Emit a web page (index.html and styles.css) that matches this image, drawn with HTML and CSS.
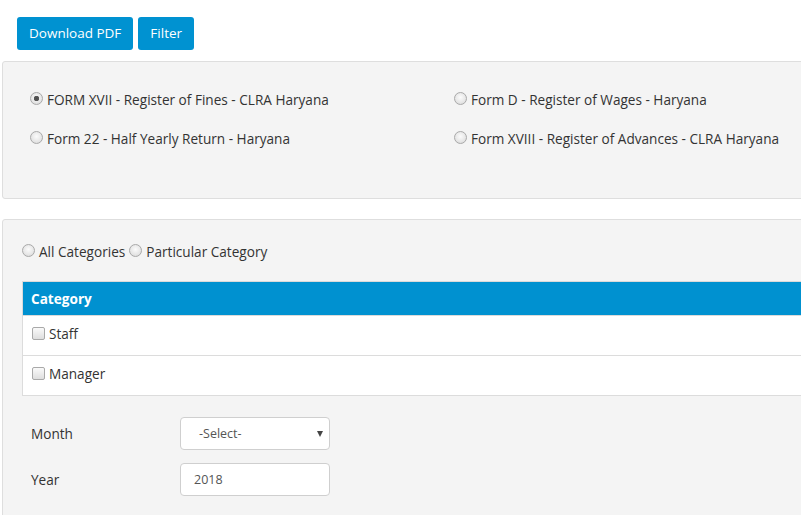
FILE: index.html
```html
<!DOCTYPE html>
<html>
<head>
<meta charset="utf-8">
<link rel="stylesheet" href="styles.css">
</head>
<body>
<div class="page">
  <div class="toolbar">
    <button class="btn">Download PDF</button>
    <button class="btn">Filter</button>
  </div>
  <div class="panel panel-forms">
    <div class="forms-grid">
      <label class="opt"><input type="radio" name="form" checked><span>FORM XVII - Register of Fines - CLRA Haryana</span></label>
      <label class="opt"><input type="radio" name="form"><span>Form D - Register of Wages - Haryana</span></label>
      <label class="opt"><input type="radio" name="form"><span>Form 22 - Half Yearly Return - Haryana</span></label>
      <label class="opt"><input type="radio" name="form"><span>Form XVIII - Register of Advances - CLRA Haryana</span></label>
    </div>
  </div>
  <div class="panel panel-filter">
    <div class="cat-choice">
      <label class="opt tight"><input type="radio" name="cat"><span>All Categories</span></label>
      <label class="opt tight"><input type="radio" name="cat"><span>Particular Category</span></label>
    </div>
    <table class="cat-table">
      <thead><tr><th>Category</th></tr></thead>
      <tbody>
        <tr><td><label class="chk"><input type="checkbox"><span>Staff</span></label></td></tr>
        <tr><td><label class="chk"><input type="checkbox"><span>Manager</span></label></td></tr>
      </tbody>
    </table>
    <div class="fields">
      <div class="field">
        <span class="field-label">Month</span>
        <div class="select">-Select-<span class="caret"></span></div>
      </div>
      <div class="field">
        <span class="field-label">Year</span>
        <div class="input">2018</div>
      </div>
    </div>
  </div>
</div>
</body>
</html>
```

FILE: styles.css
```css
html, body {
  margin: 0;
  padding: 0;
  background: #fff;
  overflow: hidden;
}
body {
  font-family: "Open Sans", "Noto Sans", sans-serif;
  font-size: 13.6px;
  color: #333;
}
.page {
  width: 840px;
}
.toolbar {
  display: flex;
  gap: 5px;
  padding: 17px 0 0 17px;
}
.btn {
  height: 33px;
  padding: 0 12px;
  border: 0;
  border-radius: 3px;
  background: #0092d1;
  color: #fff;
  font-family: inherit;
  font-size: 13.5px;
  line-height: 33px;
}
.panel {
  margin-left: 2px;
  background: #f4f4f4;
  border: 1px solid #dedede;
  border-radius: 3px;
}
.panel-forms {
  margin-top: 11px;
  box-sizing: border-box;
  height: 138px;
  padding: 26px 0 0 27px;
}
.forms-grid {
  display: grid;
  grid-template-columns: 424px auto;
  row-gap: 17px;
}
.opt {
  display: flex;
  align-items: center;
  gap: 4px;
  height: 22px;
  white-space: nowrap;
}
.opt input, .chk input {
  appearance: none;
  -webkit-appearance: none;
  margin: 0;
  flex: none;
}
.opt input {
  width: 13px;
  height: 13px;
  border-radius: 50%;
  border: 1px solid #a9a9a9;
  box-sizing: border-box;
  background: radial-gradient(circle at 50% 40%, #fbfbfb 0%, #e6e6e6 60%, #d4d4d4 100%);
  position: relative;
  top: -1px;
}
.opt input:checked {
  background: radial-gradient(circle, #4a4a4a 0, #5a5a5a 2.5px, transparent 3px),
              radial-gradient(circle at 50% 40%, #fbfbfb 0%, #e6e6e6 60%, #d4d4d4 100%);
}
.panel-filter {
  margin-top: 20px;
  padding: 20px 0 30px 19px;
}
.cat-choice {
  display: flex;
  gap: 4px;
}
.cat-table {
  margin-top: 19px;
  width: 100%;
  border-collapse: collapse;
  background: #fff;
}
.cat-table th {
  background: #0091d0;
  color: #fff;
  text-align: left;
  font-weight: bold;
  height: 33px;
  padding: 0 8px;
  border: 1px solid #dadada;
  border-right: 0;
  font-size: 13.6px;
}
.cat-table td {
  height: 39px;
  padding: 0 9px;
  border: 1px solid #dcdcdc;
  border-right: 0;
}
.chk {
  display: flex;
  align-items: center;
  gap: 4px;
  position: relative;
  top: -2px;
}
.chk input {
  width: 13px;
  height: 13px;
  border: 1px solid #a9a9a9;
  border-radius: 2px;
  box-sizing: border-box;
  background: linear-gradient(#fafafa, #dedede);
}
.fields {
  display: flex;
  flex-direction: column;
  gap: 13px;
  padding: 21px 0 0 9px;
}
.field {
  display: flex;
  align-items: center;
}
.field-label {
  width: 149px;
}
.select, .input {
  width: 150px;
  height: 33px;
  box-sizing: border-box;
  border: 1px solid #cfcfcf;
  border-radius: 4px;
  background: #fff;
  display: flex;
  align-items: center;
  font-size: 12.5px;
  color: #555;
}
.select {
  padding-left: 18px;
  position: relative;
}
.input {
  padding-left: 13px;
}
.caret {
  position: absolute;
  right: 6px;
  top: 13px;
  width: 0;
  height: 0;
  border-left: 3.5px solid transparent;
  border-right: 3.5px solid transparent;
  border-top: 6px solid #444;
}
```
